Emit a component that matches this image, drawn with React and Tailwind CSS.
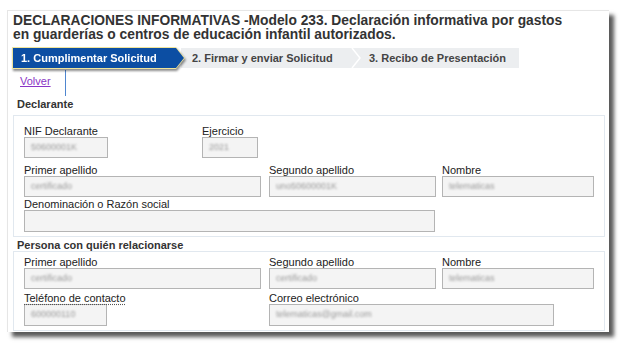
import React from "react";

const font = { fontFamily: '"Liberation Sans", Arial, sans-serif' };

function Field({ label, value, wrap, input, abbr }) {
  return (
    <div className={wrap}>
      <div className="text-[11px] leading-[11px] h-[11px] text-[#222] whitespace-nowrap">
        {abbr ? (
          <span className="underline decoration-dotted decoration-[#555] underline-offset-[2px]">{label}</span>
        ) : (
          label
        )}
      </div>
      <div
        className={`h-[21px] bg-[#f4f4f4] border border-[#b4b4b4] flex items-center px-[6px] overflow-hidden ${input}`}
      >
        <span className="text-[9px] text-[#999] blur-[0.8px] whitespace-nowrap">{value}</span>
      </div>
    </div>
  );
}

export default function App() {
  return (
    <div className="w-[621px] h-[344px] bg-white overflow-hidden pt-[10px] pl-[7px]" style={font}>
      <div className="w-[602px] h-[322px] bg-white border-l border-t border-[#e6e6e6] shadow-[5px_5px_4px_rgba(0,0,0,0.65)] relative">
        {/* Title */}
        <h1 className="pl-[5px] pt-[3px] text-[13.8px] leading-[14px] font-bold text-[#333] whitespace-nowrap">
          DECLARACIONES INFORMATIVAS -Modelo 233. Declaración informativa por gastos
          <br />
          en guarderías o centros de educación infantil autorizados.
        </h1>

        {/* Steps */}
        <div className="flex items-center ml-[4px] mt-[5px] h-[22px]">
          <div className="[filter:drop-shadow(1px_2px_1px_rgba(0,0,0,0.45))] relative z-10">
            <div className="w-[173px] h-[22px] p-[1px] bg-[#efe49a] [clip-path:polygon(0_0,164px_0,173px_50%,164px_100%,0_100%)]">
              <div className="h-full bg-[#0c4ea3] [clip-path:polygon(0_0,163px_0,171px_50%,163px_100%,0_100%)] flex items-center pl-[8px] text-[11px] font-bold text-white">
                1. Cumplimentar Solicitud
              </div>
            </div>
          </div>
          <div className="-ml-[4px] w-[338px] h-[20px] bg-[#eceef0] flex items-center text-[11px] font-bold text-[#444]">
            <span className="pl-[11px] w-[170px]">2. Firmar y enviar Solicitud</span>
            <svg width="10" height="20" viewBox="0 0 10 20" className="block">
              <polyline points="1,0 9,10 1,20" fill="none" stroke="#fff" strokeWidth="1.5" />
            </svg>
            <span className="pl-[8px]">3. Recibo de Presentación</span>
          </div>
        </div>

        {/* Volver + marker line */}
        <div className="relative h-[27px]">
          <a className="absolute left-[12px] top-[6px] text-[11px] leading-[12px] text-[#8a35c6] underline">Volver</a>
          <div className="absolute left-[57px] top-[1px] w-px h-[26px] bg-[#4f86cf]" />
        </div>

        {/* Declarante */}
        <div className="pl-[9px] mt-[2px] text-[11px] leading-[12px] font-bold text-[#333]">Declarante</div>
        <div className="ml-[5px] mt-[5px] w-[592px] border border-[#e1e8ef] pl-[10px] pt-[10px] pb-[4px]">
          <div className="flex">
            <Field label="NIF Declarante" value="50600001K" wrap="w-[178px]" input="w-[84px]" />
            <Field label="Ejercicio" value="2021" wrap="" input="w-[56px]" />
          </div>
          <div className="flex mt-[7px]">
            <Field label="Primer apellido" value="certificado" wrap="w-[245px]" input="w-[237px]" />
            <Field label="Segundo apellido" value="uno50600001K" wrap="w-[173px]" input="w-[167px]" />
            <Field label="Nombre" value="telematicas" wrap="" input="w-[152px]" />
          </div>
          <div className="flex mt-[2px]">
            <Field label="Denominación o Razón social" value="" wrap="" input="w-[411px] h-[22px]" />
          </div>
        </div>

        {/* Persona */}
        <div className="pl-[9px] mt-[2px] text-[11px] leading-[12px] font-bold text-[#333]">
          Persona con quién relacionarse
        </div>
        <div className="ml-[5px] w-[592px] border border-[#e1e8ef] pl-[10px] pt-[5px] pb-[4px]">
          <div className="flex">
            <Field label="Primer apellido" value="certificado" wrap="w-[245px]" input="w-[237px]" />
            <Field label="Segundo apellido" value="certificado" wrap="w-[173px]" input="w-[167px]" />
            <Field label="Nombre" value="telematicas" wrap="" input="w-[152px]" />
          </div>
          <div className="flex mt-[4px]">
            <Field label="Teléfono de contacto" abbr value="600000110" wrap="w-[245px]" input="w-[83px] h-[22px]" />
            <Field label="Correo electrónico" value="telematicas@gmail.com" wrap="" input="w-[285px] h-[22px]" />
          </div>
        </div>
      </div>
    </div>
  );
}
